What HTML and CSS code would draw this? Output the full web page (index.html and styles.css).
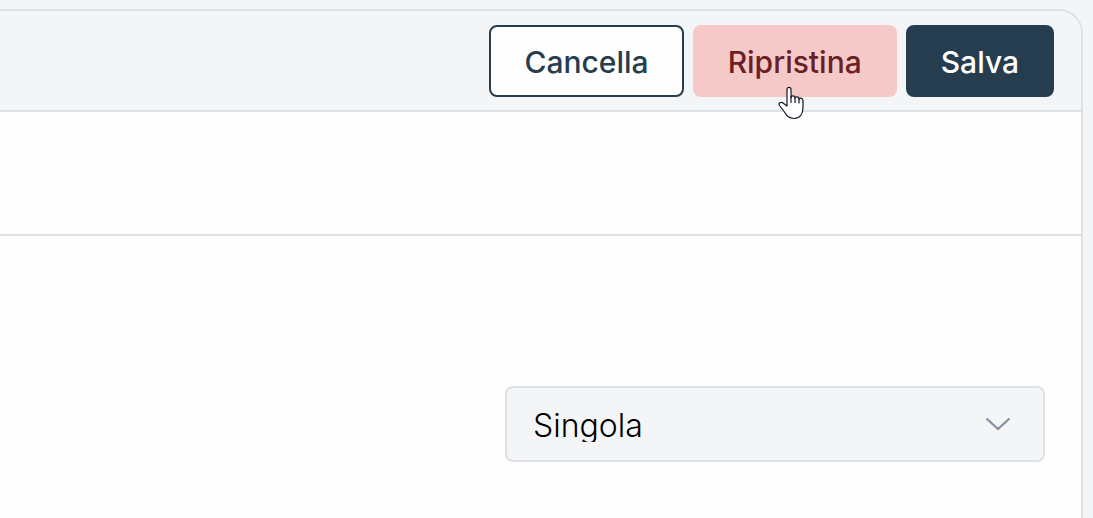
FILE: index.html
```html
<!DOCTYPE html>
<html lang="it">
<head>
  <meta charset="UTF-8" />
  <meta name="viewport" content="width=device-width, initial-scale=1.0"/>
  <title>Impostazioni</title>
  <link rel="stylesheet" href="styles.css">
</head>
<body>

  <main class="panel">

    <!-- Actions -->
    <header class="panel-header">
      <button type="button" class="btn btn-outline">Cancella</button>
      <div class="btn-wrap">
        <button type="button" class="btn btn-danger">Ripristina</button>
        <svg class="pointer" width="26" height="34" viewBox="0 0 26 34" aria-hidden="true">
          <path d="M9 20V3.600C9 .5 13 .5 13 3.600V11.500C13.500 9.300 16.600 9.500 17 11.500V12C17.600 10.300 20.400 10.600 21 12.500V13.200C22 11.600 25 12 25 14.500V21C25 27 22.500 32.500 16 32.500C10.500 32.500 8.500 29.500 6.500 26L1.500 19.500C0 17 3 15.500 5 17Z" fill="#fff" stroke="#15152b" stroke-width="1.200" stroke-linejoin="round"/>
          <path d="M13 11V16.500M17 11.500V16.500M21 12.500V17" fill="none" stroke="#15152b" stroke-width="1.200" stroke-linecap="round"/>
        </svg>
      </div>
      <button type="button" class="btn btn-primary">Salva</button>
    </header>

    <div class="panel-row"></div>

    <!-- Options -->
    <section class="panel-body">
      <div class="select-wrap">
        <select class="select" aria-label="Tipo">
          <option>Singola</option>
        </select>
        <svg class="chevron" width="26" height="14" viewBox="0 0 26 14" aria-hidden="true">
          <path d="M1.500 1.500L13 12L24.500 1.500" fill="none" stroke="#84929f" stroke-width="2.300"/>
        </svg>
      </div>
    </section>

  </main>

</body>
</html>
```
FILE: styles.css
```css
* {
  box-sizing: border-box;
}

body {
  display: flex;
  min-height: 100vh;
  margin: 0;
  padding: 9px 10px 0 0;
  background-color: #f4f5f7;
  font-family: Inter, "Liberation Sans", sans-serif;
}

.panel {
  flex: 1;
  background-color: #fefefe;
  border: 2px solid #dfe2e5;
  border-width: 2px 2px 0 0;
  border-radius: 0 24px 0 0;
}

.panel-header {
  display: flex;
  justify-content: flex-end;
  gap: 9px;
  padding: 14px 27px 13px;
  background-color: #f4f5f7;
  border-bottom: 2px solid #dfe2e5;
  border-radius: 0 22px 0 0;
}

.btn {
  height: 72px;
  padding: 2px 33px 0;
  border: 2px solid transparent;
  border-radius: 8px;
  font-family: inherit;
  font-size: 30px;
  font-weight: 500;
  line-height: 40px;
  cursor: pointer;
}

.btn-outline {
  background-color: #fefefe;
  border-color: #263c4f;
  color: #263c4f;
}

.btn-danger {
  background-color: #f6c9c9;
  border-color: #f6c9c9;
  color: #6b2023;
}

.btn-primary {
  background-color: #263c4f;
  border-color: #263c4f;
  color: #fff;
}

.btn-wrap {
  position: relative;
}

.pointer {
  position: absolute;
  top: 61px;
  left: 85px;
  pointer-events: none;
}

.panel-row {
  height: 124px;
  border-bottom: 2px solid #dfe2e5;
}

.panel-body {
  display: flex;
  justify-content: flex-end;
  padding: 150px 36px 56px;
}

.select-wrap {
  position: relative;
  width: 540px;
  max-width: 100%;
}

.select {
  display: block;
  appearance: none;
  width: 100%;
  height: 76px;
  padding: 4px 72px 0 26px;
  background-color: #f4f5f7;
  border: 2px solid #dfe2e5;
  border-radius: 8px;
  color: #000;
  font-family: inherit;
  font-size: 32px;
  font-weight: 300;
  line-height: 32px;
}

.chevron {
  position: absolute;
  top: 31px;
  right: 34px;
  pointer-events: none;
}
```
